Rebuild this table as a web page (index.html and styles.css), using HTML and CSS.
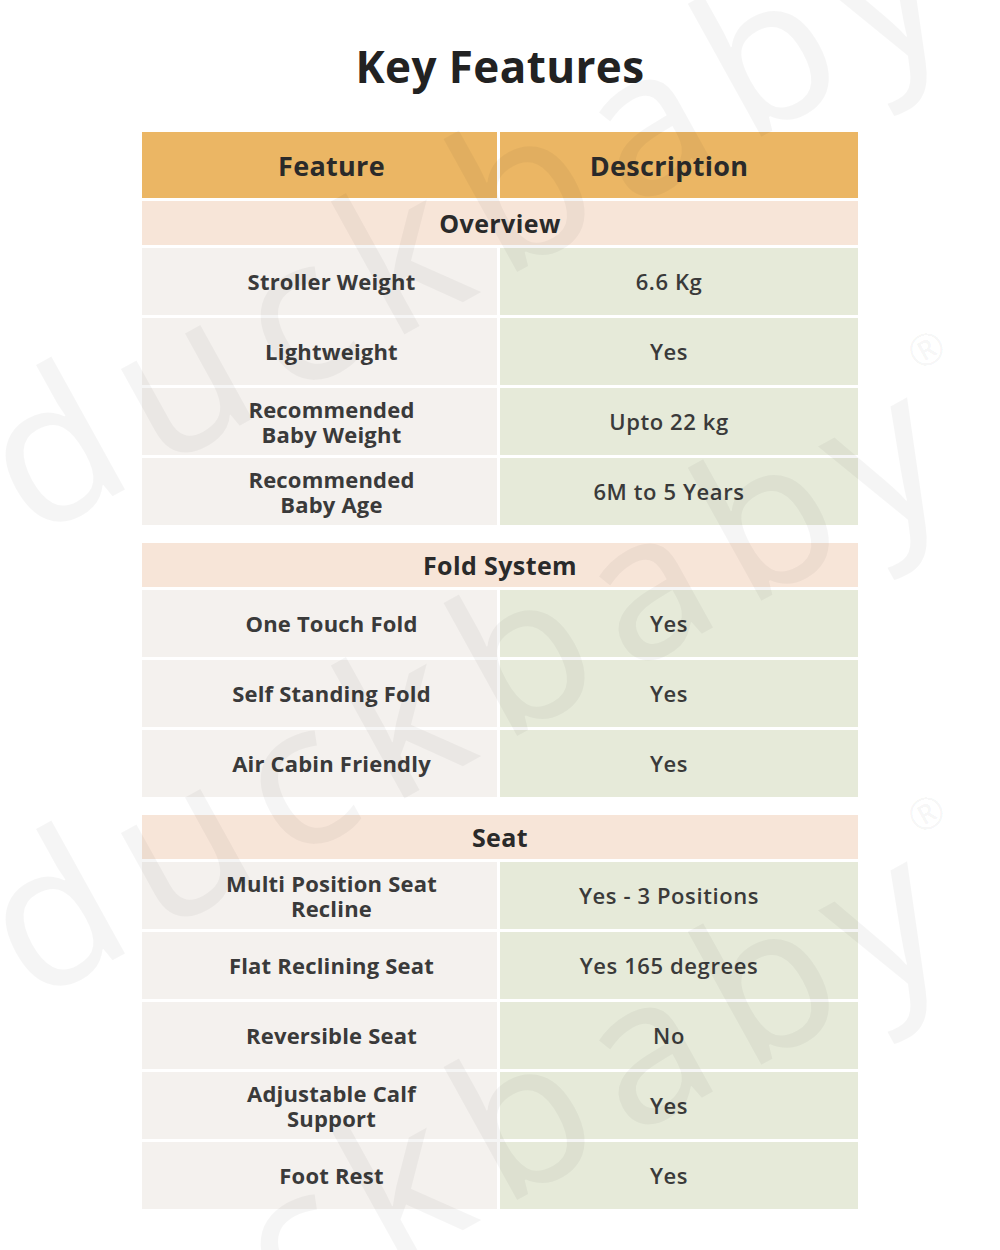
FILE: index.html
```html
<!DOCTYPE html>
<html lang="en">
<head>
<meta charset="utf-8">
<title>Key Features</title>
<link rel="stylesheet" href="styles.css">
</head>
<body>
<div class="page">
  <h1 class="title">Key Features</h1>
  <div class="table">
    <div class="head-row">
      <div class="head-cell left">Feature</div>
      <div class="head-cell right">Description</div>
    </div>

    <div class="section">
      <div class="section-title">Overview</div>
      <div class="row"><div class="cell feat">Stroller Weight</div><div class="cell desc">6.6 Kg</div></div>
      <div class="row"><div class="cell feat">Lightweight</div><div class="cell desc">Yes</div></div>
      <div class="row"><div class="cell feat">Recommended<br>Baby Weight</div><div class="cell desc">Upto 22 kg</div></div>
      <div class="row"><div class="cell feat">Recommended<br>Baby Age</div><div class="cell desc">6M to 5 Years</div></div>
    </div>

    <div class="section spaced">
      <div class="section-title">Fold System</div>
      <div class="row"><div class="cell feat">One Touch Fold</div><div class="cell desc">Yes</div></div>
      <div class="row"><div class="cell feat">Self Standing Fold</div><div class="cell desc">Yes</div></div>
      <div class="row"><div class="cell feat">Air Cabin Friendly</div><div class="cell desc">Yes</div></div>
    </div>

    <div class="section spaced">
      <div class="section-title">Seat</div>
      <div class="row"><div class="cell feat">Multi Position Seat<br>Recline</div><div class="cell desc">Yes - 3 Positions</div></div>
      <div class="row"><div class="cell feat">Flat Reclining Seat</div><div class="cell desc">Yes 165 degrees</div></div>
      <div class="row"><div class="cell feat">Reversible Seat</div><div class="cell desc">No</div></div>
      <div class="row"><div class="cell feat">Adjustable Calf<br>Support</div><div class="cell desc">Yes</div></div>
      <div class="row"><div class="cell feat">Foot Rest</div><div class="cell desc">Yes</div></div>
    </div>
  </div>

  <div class="watermark" aria-hidden="true">
    <span class="wm wm-a">duckbaby<sup>®</sup></span>
    <span class="wm wm-b">duckbaby<sup>®</sup></span>
    <span class="wm wm-c">duckbaby<sup>®</sup></span>
  </div>
</div>
</body>
</html>
```

FILE: styles.css
```css
* { box-sizing: border-box; }

html, body {
  margin: 0;
  padding: 0;
  background: #ffffff;
}

body {
  font-family: "Open Sans", "Liberation Sans", sans-serif;
  color: #3a3a3a;
}

.page {
  position: relative;
  width: 1000px;
  height: 1250px;
  overflow: hidden;
  padding-top: 40px;
}

.title {
  margin: 0;
  text-align: center;
  font-size: 44px;
  line-height: 52px;
  font-weight: 700;
  color: #222222;
  letter-spacing: 0.4px;
}

.table {
  width: 716px;
  margin: 40px auto 0;
  display: flex;
  flex-direction: column;
  gap: 3px;
}

.head-row,
.row {
  display: grid;
  grid-template-columns: 355px 358px;
  column-gap: 3px;
}

.head-cell {
  height: 66px;
  background: #ebb664;
  display: flex;
  align-items: center;
  justify-content: center;
  font-size: 27px;
  font-weight: 700;
  letter-spacing: 0.3px;
  color: #2a2a2a;
}

.head-cell.left { padding-left: 24px; }
.head-cell.right { padding-right: 20px; }

.section {
  display: flex;
  flex-direction: column;
  gap: 3px;
}

.section.spaced {
  margin-top: 15px;
}

.section-title {
  height: 44px;
  background: #f7e5d8;
  display: flex;
  align-items: center;
  justify-content: center;
  font-size: 25px;
  font-weight: 700;
  letter-spacing: 0.4px;
  color: #2a2a2a;
}

.cell {
  height: 67px;
  display: flex;
  align-items: center;
  justify-content: center;
  text-align: center;
  font-size: 22px;
  line-height: 25px;
  letter-spacing: 0.2px;
  color: #3a3a3a;
}

.feat {
  background: #f4f1ee;
  font-weight: 700;
  padding-left: 24px;
}

.desc {
  background: #e6ead9;
  font-weight: 600;
  letter-spacing: 0.6px;
  padding-right: 20px;
}

.watermark {
  position: absolute;
  inset: 0;
  pointer-events: none;
  overflow: hidden;
}

.wm {
  position: absolute;
  left: 24px;
  font-family: "Noto Sans", "Open Sans", sans-serif;
  font-weight: 400;
  font-size: 200px;
  line-height: 1;
  letter-spacing: 22px;
  white-space: nowrap;
  color: rgba(0, 0, 0, 0.04);
  transform-origin: 0 80%;
  transform: rotate(-29deg);
}

.wm sup {
  font-size: 44px;
  vertical-align: top;
  position: relative;
  top: 14px;
  letter-spacing: 0;
}

.wm-a { top: 366px; }
.wm-b { top: 830px; }
.wm-c { top: 1294px; }
```
